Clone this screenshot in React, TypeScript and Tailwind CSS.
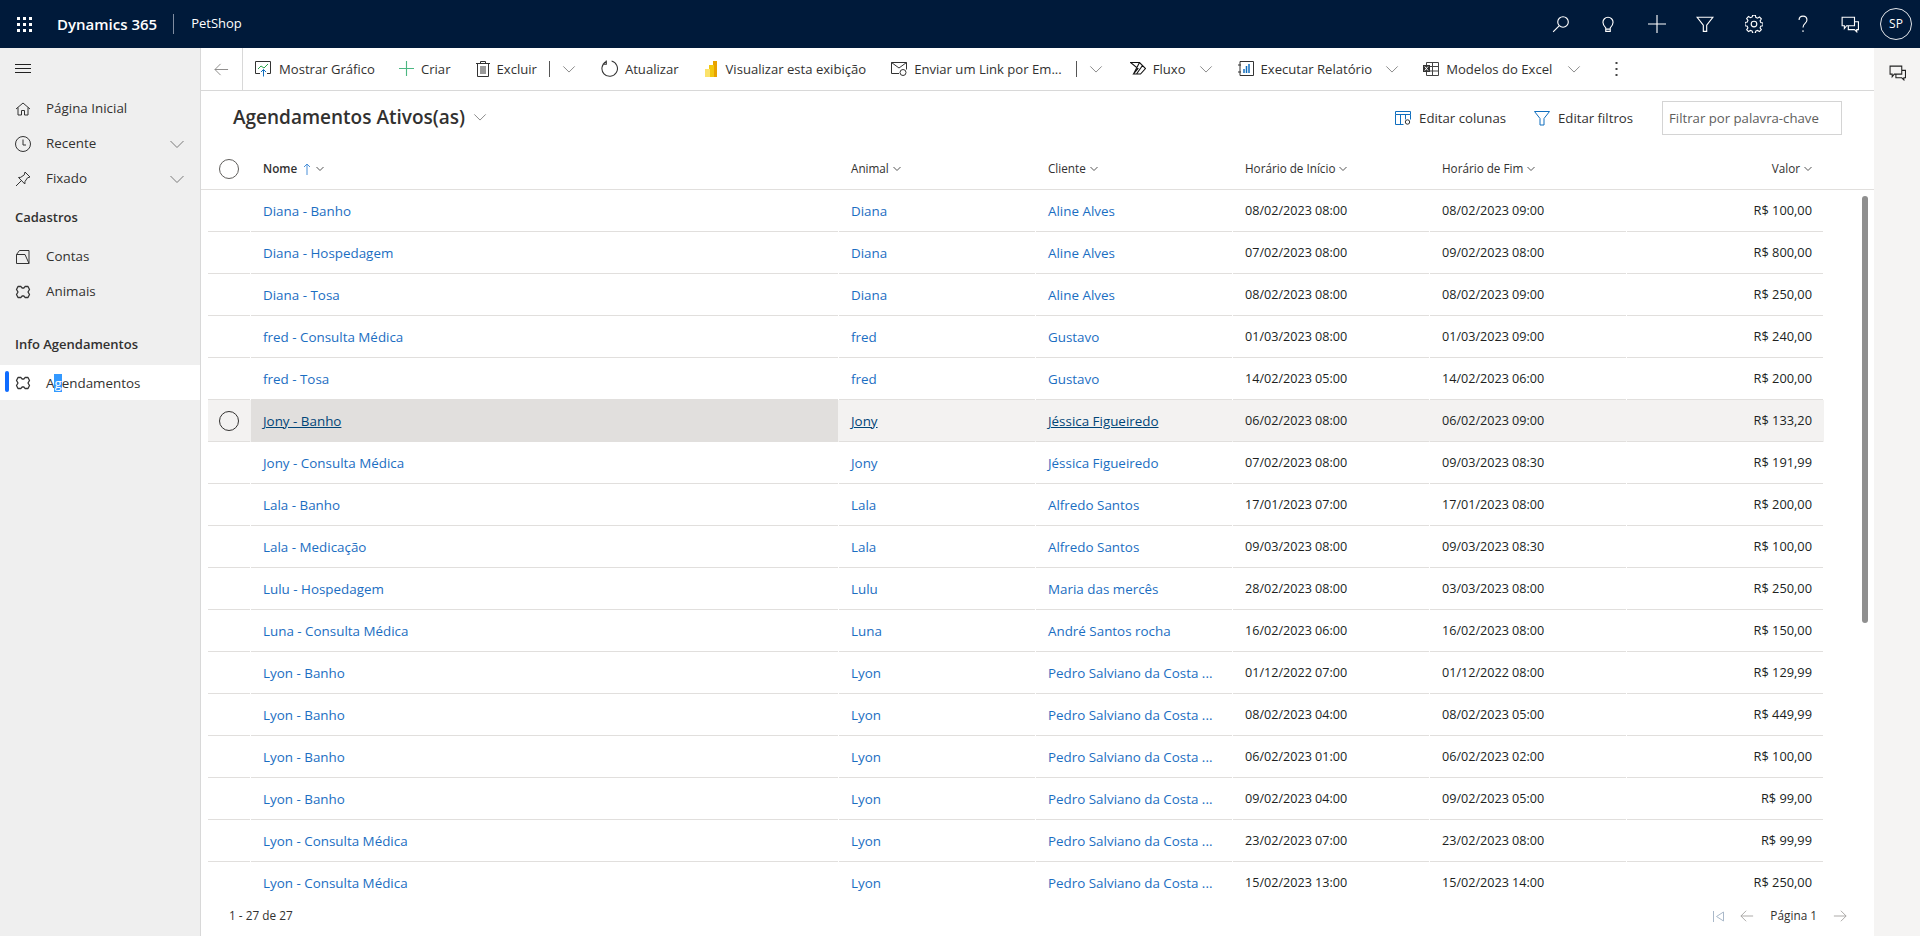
import { ReactNode } from "react";

const font = "font-['Open_Sans','Noto_Sans',sans-serif]";

const rows = [
  ["Diana - Banho", "Diana", "Aline Alves", "08/02/2023 08:00", "08/02/2023 09:00", "R$ 100,00"],
  ["Diana - Hospedagem", "Diana", "Aline Alves", "07/02/2023 08:00", "09/02/2023 08:00", "R$ 800,00"],
  ["Diana - Tosa", "Diana", "Aline Alves", "08/02/2023 08:00", "08/02/2023 09:00", "R$ 250,00"],
  ["fred - Consulta Médica", "fred", "Gustavo", "01/03/2023 08:00", "01/03/2023 09:00", "R$ 240,00"],
  ["fred - Tosa", "fred", "Gustavo", "14/02/2023 05:00", "14/02/2023 06:00", "R$ 200,00"],
  ["Jony - Banho", "Jony", "Jéssica Figueiredo", "06/02/2023 08:00", "06/02/2023 09:00", "R$ 133,20"],
  ["Jony - Consulta Médica", "Jony", "Jéssica Figueiredo", "07/02/2023 08:00", "09/03/2023 08:30", "R$ 191,99"],
  ["Lala - Banho", "Lala", "Alfredo Santos", "17/01/2023 07:00", "17/01/2023 08:00", "R$ 200,00"],
  ["Lala - Medicação", "Lala", "Alfredo Santos", "09/03/2023 08:00", "09/03/2023 08:30", "R$ 100,00"],
  ["Lulu - Hospedagem", "Lulu", "Maria das mercês", "28/02/2023 08:00", "03/03/2023 08:00", "R$ 250,00"],
  ["Luna - Consulta Médica", "Luna", "André Santos rocha", "16/02/2023 06:00", "16/02/2023 08:00", "R$ 150,00"],
  ["Lyon - Banho", "Lyon", "Pedro Salviano da Costa ...", "01/12/2022 07:00", "01/12/2022 08:00", "R$ 129,99"],
  ["Lyon - Banho", "Lyon", "Pedro Salviano da Costa ...", "08/02/2023 04:00", "08/02/2023 05:00", "R$ 449,99"],
  ["Lyon - Banho", "Lyon", "Pedro Salviano da Costa ...", "06/02/2023 01:00", "06/02/2023 02:00", "R$ 100,00"],
  ["Lyon - Banho", "Lyon", "Pedro Salviano da Costa ...", "09/02/2023 04:00", "09/02/2023 05:00", "R$ 99,00"],
  ["Lyon - Consulta Médica", "Lyon", "Pedro Salviano da Costa ...", "23/02/2023 07:00", "23/02/2023 08:00", "R$ 99,99"],
  ["Lyon - Consulta Médica", "Lyon", "Pedro Salviano da Costa ...", "15/02/2023 13:00", "15/02/2023 14:00", "R$ 250,00"],
];

const Svg = ({ size = 16, className = "", children }: { size?: number; className?: string; children: ReactNode }) => (
  <svg width={size} height={size} viewBox="0 0 16 16" fill="none" stroke="currentColor" strokeWidth="1" className={`shrink-0 ${className}`}>
    {children}
  </svg>
);

const Chevron = ({ className = "", size = 14 }: { className?: string; size?: number }) => (
  <Svg size={size} className={`text-[#7a7a7a] ${className}`}>
    <path d="M1.500 5 8 11.500 14.500 5" />
  </Svg>
);

const SmallChevron = () => (
  <svg width="8" height="8" viewBox="0 0 8 8" fill="none" stroke="#555" strokeWidth="1" className="shrink-0">
    <path d="M0.500 2 4 5.500 7.500 2" />
  </svg>
);

const Puzzle = () => (
  <Svg size={16} className="text-[#333]">
    <path
      d="M3 2.500h3l1 1.500h2l1-1.500h3l1.500 3-1.500 2.500 1.500 2.500-1.500 3h-3l-1-1.500H7l-1 1.500H3l-1.500-3L3 8 1.500 5.500z"
      strokeLinejoin="round"
      strokeWidth="1.300"
    />
  </Svg>
);

const NavItem = ({ icon, label, chevron }: { icon: ReactNode; label: string; chevron?: boolean }) => (
  <div className="flex h-[35px] items-center pl-[15px] pr-[15px] text-[13.4px] text-[#323130]">
    <span className="flex w-4 justify-center">{icon}</span>
    <span className="ml-[15px] flex-1">{label}</span>
    {chevron && <Chevron size={16} />}
  </div>
);

const Sidebar = () => (
  <aside className="flex w-[201px] shrink-0 flex-col border-r border-[#d8d8d8] bg-[#efefef]">
    <div className="flex h-[42px] items-center pl-[15px]">
      <svg width="16" height="10" viewBox="0 0 16 10" stroke="#222" strokeWidth="1">
        <path d="M0 .5h16M0 4.500h16M0 8.500h16" />
      </svg>
    </div>
    <div className="mt-[1px]">
      <NavItem
        label="Página Inicial"
        icon={
          <Svg className="text-[#333]">
            <path d="M1 8 8 2l7 6M3 6.500V14h3.500V9.500h3V14H13V6.500" />
          </Svg>
        }
      />
      <NavItem
        label="Recente"
        chevron
        icon={
          <Svg className="text-[#333]">
            <circle cx="8" cy="8" r="7.500" />
            <path d="M8 3.500V9h3" />
          </Svg>
        }
      />
      <NavItem
        label="Fixado"
        chevron
        icon={
          <Svg className="text-[#333]">
            <path d="M10 1 15 6 12.500 6.800 10 10.500 9.800 13 3.500 6.500l2.300-.2L9.300 3.800zM6.500 9.500 1 15" />
          </Svg>
        }
      />
    </div>
    <div className="mt-[4px] flex h-[35px] items-center pl-[15px] text-[13px] font-semibold text-[#323130]">Cadastros</div>
    <div className="mt-[4px]">
      <NavItem
        label="Contas"
        icon={
          <Svg className="text-[#333]">
            <path d="M1.500 5.500 4.500 1.500h9.500v13H1.500zM1.500 5.500h8.500l4 9" strokeLinejoin="round" />
          </Svg>
        }
      />
      <NavItem label="Animais" icon={<Puzzle />} />
    </div>
    <div className="mt-[18px] flex h-[35px] items-center pl-[15px] text-[13px] font-semibold text-[#323130]">Info Agendamentos</div>
    <div className="relative mt-[3px] flex h-[35px] items-center bg-white pl-[15px] text-[13.4px] text-[#323130]">
      <span className="absolute left-[5px] top-[6px] h-[21px] w-[4px] rounded-sm bg-[#0f6cff]" />
      <span className="flex w-4 justify-center">
        <Puzzle />
      </span>
      <span className="ml-[15px] pt-[2px]">
        A<span className="bg-[#3399ff] text-white">g</span>endamentos
      </span>
    </div>
  </aside>
);

const TopBar = () => (
  <header className="flex h-12 shrink-0 items-center bg-[#001a3a] text-white">
    <svg width="15" height="15" viewBox="0 0 15 15" fill="#fff" className="ml-[17px]">
      {[0, 6, 12].flatMap((y) =>
        [0, 6, 12].map((x) => <rect key={`${x}-${y}`} x={x} y={y} width="3" height="3" />)
      )}
    </svg>
    <span className="ml-[25px] text-[15px] font-semibold">Dynamics 365</span>
    <span className="ml-[16px] h-5 w-px bg-[#7f8ca0]" />
    <span className="ml-[17px] text-[13px]">PetShop</span>
    <div className="ml-auto flex items-center">
      <Svg size={18} className="mr-[29px]">
        <circle cx="9.800" cy="6.200" r="4.700" />
        <path d="M6.300 9.700 1 15" />
      </Svg>
      <Svg size={18} className="mr-[31px]">
        <path d="M6 11.500C4.500 10 3.500 8.800 3.500 6.500a4.500 4.500 0 0 1 9 0c0 2.300-1 3.500-2.500 5v3H6zM6 12.500h4" />
      </Svg>
      <Svg size={18} className="mr-[30px]">
        <path d="M8 0v16M0 8h16" />
      </Svg>
      <Svg size={18} className="mr-[31px]">
        <path d="M1 2h14L9.500 9v5.500h-3V9z" />
      </Svg>
      <Svg size={18} className="mr-[31px]">
        <path d="M6.800 1h2.400l.4 2 1.500.7 1.800-1 1.600 1.700-1.100 1.700.6 1.500 2 .4v2.400l-2 .4-.6 1.500 1.100 1.700-1.600 1.600-1.800-1-1.500.6-.4 2H6.800l-.4-2-1.500-.6-1.800 1-1.600-1.600 1.100-1.700-.6-1.500-2-.4V7.600l2-.4.6-1.500-1.100-1.700 1.600-1.700 1.800 1 1.500-.7z" transform="translate(0 -.9)" />
        <circle cx="8" cy="8" r="2.500" />
      </Svg>
      <Svg size={18} className="mr-[29px]">
        <path d="M4.500 4.500C4.500 2.500 6 1 8 1s3.500 1.500 3.500 3.500C11.500 7.500 8 7.500 8 11M8 13.500V15" />
      </Svg>
      <Svg size={18} className="mr-[21px]">
        <path d="M1 2h11v7.500H5L3 12V9.500H1zM12 6h3.500v7H14v2l-2-2H6.500v-3.500" fill="#001a3a" />
      </Svg>
      <div className="mr-[8px] flex size-8 items-center justify-center rounded-full border border-[#e3e6ea] text-[12px]">SP</div>
    </div>
  </header>
);

const Cmd = ({ icon, label, className = "" }: { icon?: ReactNode; label: string; className?: string }) => (
  <div className={`flex shrink-0 items-center ${className}`}>
    {icon}
    <span className="ml-[7px] pt-[2px]">{label}</span>
  </div>
);

const CommandBar = () => (
  <div className="flex h-[43px] shrink-0 items-stretch border-b border-[#d8d8d8] text-[13.1px] text-[#323130]">
    <div className="flex w-[42px] shrink-0 items-center justify-center border-r border-[#d8d8d8] text-[#8a8886]">
      <Svg size={15}>
        <path d="M15 8H1M7 2 1 8l6 6" />
      </Svg>
    </div>
    <div className="flex items-center">
      <Cmd
        className="ml-[12px]"
        label="Mostrar Gráfico"
        icon={
          <svg width="17" height="16" viewBox="0 0 17 16" fill="none" stroke="#333">
            <path d="M5 12.500H.5V.500h15v12H12" />
            <path d="M3 8l3-3 3 2 4-4" stroke="#2aa34a" />
            <path d="M8.500 15.500V8.500M6 11l2.500-2.500L11 11" stroke="#106ebe" />
          </svg>
        }
      />
      <Cmd
        className="ml-[24px]"
        label="Criar"
        icon={
          <Svg size={15} className="text-[#4cb782]">
            <path d="M8 0v16M0 8h16" strokeWidth="1.200" />
          </Svg>
        }
      />
      <Cmd
        className="ml-[25px]"
        label="Excluir"
        icon={
          <svg width="14" height="16" viewBox="0 0 14 16" fill="none" stroke="#333">
            <path d="M0 2.500h14M4.500 2.500v-2h5v2M1.500 2.500v13h11v-13M5 5v8M7 5v8M9 5v8" />
          </svg>
        }
      />
      <span className="ml-[12px] h-4 w-px bg-[#555]" />
      <Chevron className="ml-[12px]" />
      <Cmd
        className="ml-[25px]"
        label="Atualizar"
        icon={
          <Svg size={17} className="text-[#333]">
            <path d="M5 1.500A7.300 7.300 0 1 0 10 1M5 .5v3.500H1.500" />
          </Svg>
        }
      />
      <svg width="12" height="16" viewBox="0 0 12 16" className="ml-[26px] shrink-0">
        <rect x="8" y="0" width="4" height="16" fill="#e8a200" />
        <rect x="4" y="4" width="5" height="12" fill="#f2c811" />
        <rect x="0" y="8" width="5" height="8" fill="#fbe26b" />
      </svg>
      <span className="ml-[9px] shrink-0 pt-[2px]">Visualizar esta exibição</span>
      <Cmd
        className="ml-[25px]"
        label="Enviar um Link por Em..."
        icon={
          <svg width="16" height="14" viewBox="0 0 16 14" fill="none" stroke="#333">
            <path d="M8 11.500H.5V.500h15v7M.5.500 8 6l7.500-5.500" />
            <circle cx="12" cy="10.500" r="3" />
          </svg>
        }
      />
      <span className="ml-[14px] h-4 w-px bg-[#555]" />
      <Chevron className="ml-[12px]" />
      <Cmd
        className="ml-[27px]"
        label="Fluxo"
        icon={
          <svg width="16" height="13" viewBox="0 0 16 13" fill="none" stroke="#111" strokeWidth="1.100">
            <path d="M.5.500h9l6 6-5 5.500H3.500l4.500-5.500L.5.500zM9.500.500 3.500 12M12.500 3.500 6.500 12" />
          </svg>
        }
      />
      <Chevron className="ml-[13px]" />
      <Cmd
        className="ml-[25px]"
        label="Executar Relatório"
        icon={
          <svg width="16" height="15" viewBox="0 0 16 15" fill="none" stroke="#333">
            <path d="M2 .500h13.500v14H2zM0 4h3M0 11h3" />
            <path d="M6 12V8M8.500 12V5M11 12V3" stroke="#106ebe" strokeWidth="1.500" />
          </svg>
        }
      />
      <Chevron className="ml-[13px]" />
      <Cmd
        className="ml-[24px]"
        label="Modelos do Excel"
        icon={
          <svg width="16" height="14" viewBox="0 0 16 14" fill="none" stroke="#444">
            <path d="M3.500.500h12v13h-12zM3.500 4.500h12M3.500 9h12M9.500.500v13" />
            <rect x="0" y="3" width="7" height="7" fill="#333" stroke="none" />
            <path d="M1.800 4.500 5 8.500M5 4.500 1.800 8.500" stroke="#fff" />
          </svg>
        }
      />
      <Chevron className="ml-[15px]" />
      <svg width="3" height="14" viewBox="0 0 3 14" fill="#444" className="ml-[34px]">
        <rect x="0.500" y="0" width="2" height="2" />
        <rect x="0.500" y="6" width="2" height="2" />
        <rect x="0.500" y="12" width="2" height="2" />
      </svg>
    </div>
  </div>
);

const ListHeader = () => (
  <div className="flex h-[59px] shrink-0 items-start pl-[32px] pr-[32px] pt-[10px]">
    <div className="flex h-[34px] items-center pb-[2px]">
      <span className="text-[19px] font-semibold text-[#323130]">Agendamentos Ativos(as)</span>
      <Chevron className="ml-[8px]" />
    </div>
    <div className="ml-auto flex items-center text-[13.2px] text-[#323130]">
      <svg width="16" height="14" viewBox="0 0 16 14" fill="none" stroke="#106ebe">
        <path d="M.5.500h15v3H.5zM.5 3.500v10h8M5.500 3.500v10M10.500 3.500v5M15.500 3.500v5" />
        <circle cx="12.500" cy="11" r="2.200" stroke="#333" />
      </svg>
      <span className="ml-[8px] pt-px">Editar colunas</span>
      <Svg size={16} className="ml-[28px] text-[#106ebe]">
        <path d="M.5 1.500h15L10 8.500V15H6V8.500z" />
      </Svg>
      <span className="ml-[8px] pt-px">Editar filtros</span>
      <div className="ml-[29px] flex h-[34px] w-[180px] items-center border border-[#d4d4d4] pl-[6px] pt-px text-[#605e5c]">Filtrar por palavra-chave</div>
    </div>
  </div>
);

const colWidths = ["w-[587px]", "w-[196px]", "w-[196px]", "w-[196px]", "w-[196px]", "w-[196px]"];

const GridHeader = () => {
  const labels = ["Animal", "Cliente", "Horário de Início", "Horário de Fim"];
  return (
    <div className="flex h-[40px] shrink-0 border-b border-[#e1dfdd] pb-[2px] pl-[7px] text-[11.7px] text-[#323130]">
      <div className="mr-px flex w-[42px] items-center justify-center">
        <span className="size-5 rounded-full border border-[#605e5c]" />
      </div>
      <div className="mr-px flex w-[587px] items-center pl-[12px] font-semibold">
        Nome
        <svg width="8" height="12" viewBox="0 0 8 12" fill="none" stroke="#4a90d9" className="ml-[6px] mr-[5px]">
          <path d="M4 12V1M1 4l3-3 3 3" />
        </svg>
        <SmallChevron />
      </div>
      {labels.map((l) => (
        <div key={l} className="mr-px flex w-[196px] items-center gap-[4px] pl-[12px]">
          {l}
          <SmallChevron />
        </div>
      ))}
      <div className="mr-px flex w-[196px] items-center justify-end gap-[4px] pr-[11px]">
        Valor
        <SmallChevron />
      </div>
    </div>
  );
};

const Row = ({ cells, hovered }: { cells: string[]; hovered: boolean }) => {
  const linkClass = hovered ? "text-[#004578] underline" : "text-[#1b6ec2]";
  return (
    <div className={`flex h-[42px] shrink-0 ${hovered ? "bg-[#f3f2f1]" : ""}`}>
      <div className="mr-px flex w-[42px] items-center justify-center border-b border-[#e1dfdd]">
        {hovered && <span className="size-5 rounded-full border border-[#323130]" />}
      </div>
      {cells.map((c, i) => {
        const base = `mr-px flex h-full shrink-0 items-center border-b border-[#e1dfdd] pt-px ${colWidths[i]}`;
        const bg = hovered && i === 0 ? "bg-[#e1dfdd]" : "";
        if (i < 3) {
          return (
            <div key={i} className={`${base} ${bg} pl-[12px] text-[13.4px]`}>
              <span className={linkClass}>{c}</span>
            </div>
          );
        }
        return (
          <div key={i} className={`${base} ${i === 5 ? "justify-end pr-[11px] text-[12.8px]" : "pl-[12px] text-[12.6px]"} text-[#201f1e]`}>
            {c}
          </div>
        );
      })}
    </div>
  );
};

const Footer = () => (
  <div className="flex h-[34px] shrink-0 items-center bg-white pb-[6px] pl-[28px] text-[11.8px] text-[#323130]">
    <span>1 - 27 de 27</span>
    <div className="ml-auto flex items-center pr-[27px] text-[#a19f9d]">
      <svg width="11" height="11" viewBox="0 0 11 11" fill="none" stroke="#a9b8c9">
        <path d="M.5 0v11M10.500 1v9l-7-4.500z" />
      </svg>
      <Svg size={14} className="ml-[16px]">
        <path d="M15 8H1M7 2 1 8l6 6" />
      </Svg>
      <span className="ml-[16px] text-[#323130]">Página 1</span>
      <Svg size={14} className="ml-[16px]">
        <path d="M1 8h14M9 2l6 6-6 6" />
      </Svg>
    </div>
  </div>
);

export default function App() {
  return (
    <div className={`flex h-screen w-full flex-col overflow-hidden bg-white text-[13px] ${font}`}>
      <TopBar />
      <div className="flex min-h-0 flex-1">
        <Sidebar />
        <main className="flex min-w-0 flex-1 flex-col">
          <CommandBar />
          <ListHeader />
          <GridHeader />
          <div className="flex min-h-0 flex-1 overflow-hidden pl-[7px]">
            <div className="flex w-[1616px] shrink-0 flex-col">
              {rows.map((r, i) => (
                <Row key={i} cells={r} hovered={i === 5} />
              ))}
            </div>
            <div className="ml-[38px] mt-[6px] h-[427px] w-[6px] rounded-full bg-[#8f8f8f]" />
          </div>
          <Footer />
        </main>
        <div className="flex w-[46px] shrink-0 justify-center bg-[#f5f4f3] pt-[16px]">
          <Svg size={17} className="text-[#222]">
            <path d="M1 2h11v7.500H5L3 12V9.500H1zM12 6h3.500v7H14v2l-2-2H6.500v-3.500" fill="#f5f4f3" />
          </Svg>
        </div>
      </div>
    </div>
  );
}
